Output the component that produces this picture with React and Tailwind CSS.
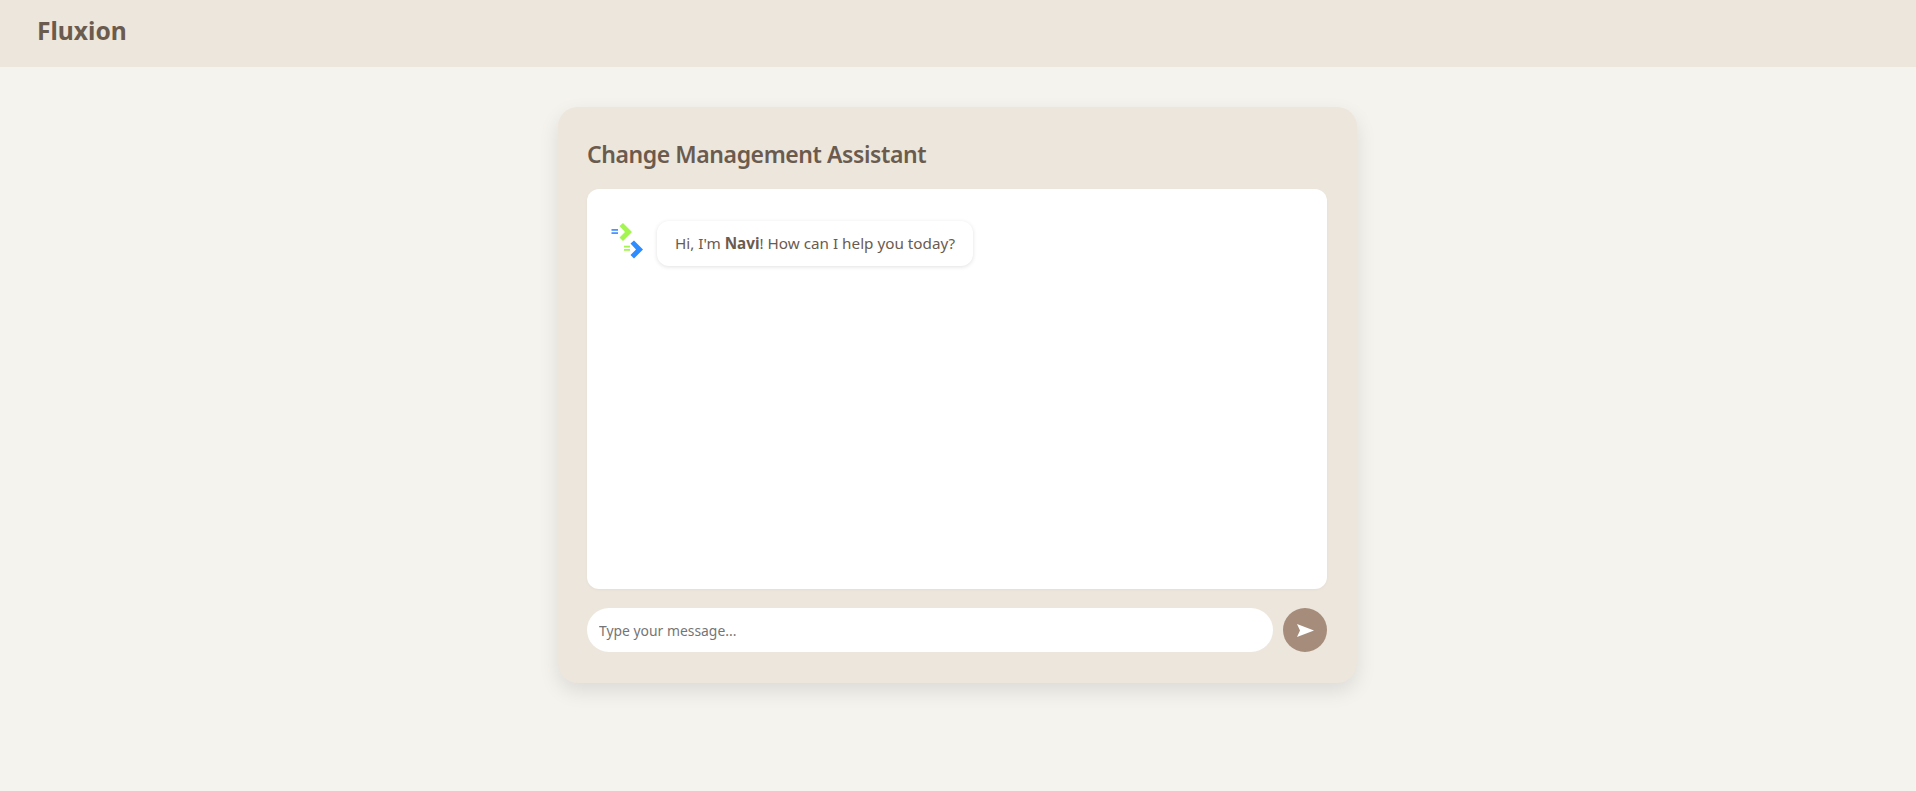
import {useState} from "react";

// Navi logo, two chevrons with small dashes
function NaviLogo(){
    return(
        <svg width="32" height="38" viewBox="0 0 32 38" className="shrink-0 mt-[1px]">
            <rect x="0.5" y="7" width="6.5" height="1.8" fill="#4d94ff"/>
            <rect x="0.5" y="10.2" width="6.5" height="1.8" fill="#4d94ff"/>
            <polygon points="8.5,4 12,1 21,10 12,19 8.5,15.5 14,10" fill="#a4f550"/>
            <rect x="13" y="23.7" width="6" height="1.8" fill="#a4f550"/>
            <rect x="13" y="27" width="6" height="1.8" fill="#a4f550"/>
            <polygon points="19.5,21.5 23,18.5 32,27.5 23,36.5 19.5,33 25,27.5" fill="#2f8cff"/>
        </svg>
    )
}

function App(){

    const [message, setMessage] = useState("");

    return(
        <div className="min-h-[791px] bg-[#f4f3ee] text-[#6b5b4e] font-['Noto_Sans',sans-serif]">
            {/*  Header  */}
            <header className="h-[67px] bg-[#ede6dc] flex items-center px-[37px]">
                <h1 className="text-[24.6px] leading-[34px] font-bold -mt-[5px]">Fluxion</h1>
            </header>

            {/*  Chat Card  */}
            <main className="pt-10 pr-px flex justify-center">
                <div className="w-[799px] h-[576px] bg-[#ede6dc] rounded-[20px] pt-[29px] pb-[29px] pl-[29px] pr-[30px] shadow-[0_8px_20px_rgba(0,0,0,0.1)] flex flex-col">
                    <h2 className="text-[23px] leading-[36px] tracking-[-0.42px] font-semibold mb-[17px]">Change Management Assistant</h2>

                    {/*  Messages  */}
                    <div className="h-[400px] bg-white rounded-xl pt-8 px-6 shadow-[0_1px_3px_rgba(0,0,0,0.04)]">
                        <div className="flex items-start gap-[14px]">
                            <NaviLogo/>
                            <p className="h-[45px] bg-white rounded-xl shadow-[0_1px_4px_rgba(0,0,0,0.12)] px-[18px] flex items-center text-[15.25px]">
                                <span>Hi, I'm <strong className="font-bold">Navi</strong>! How can I help you today?</span>
                            </p>
                        </div>
                    </div>

                    {/*  Input  */}
                    <div className="mt-[19px] flex items-center gap-[10px]">
                        <input
                            placeholder="Type your message..."
                            type="text"
                            value={message}
                            onChange={(e)=>setMessage(e.target.value)}
                            className="flex-1 h-11 bg-white rounded-[22px] px-3 text-[13.9px] outline-none placeholder:text-[#757575]"
                        />
                        <button className="w-11 h-11 rounded-full bg-[#a68d7b] flex items-center justify-center cursor-pointer">
                            <svg width="17" height="13" viewBox="0 0 17 13">
                                <path d="M0 0 L17 6.5 L0 13 L3 6.5 Z" fill="#fff"/>
                            </svg>
                        </button>
                    </div>
                </div>
            </main>
        </div>
    )
}

export default App;
